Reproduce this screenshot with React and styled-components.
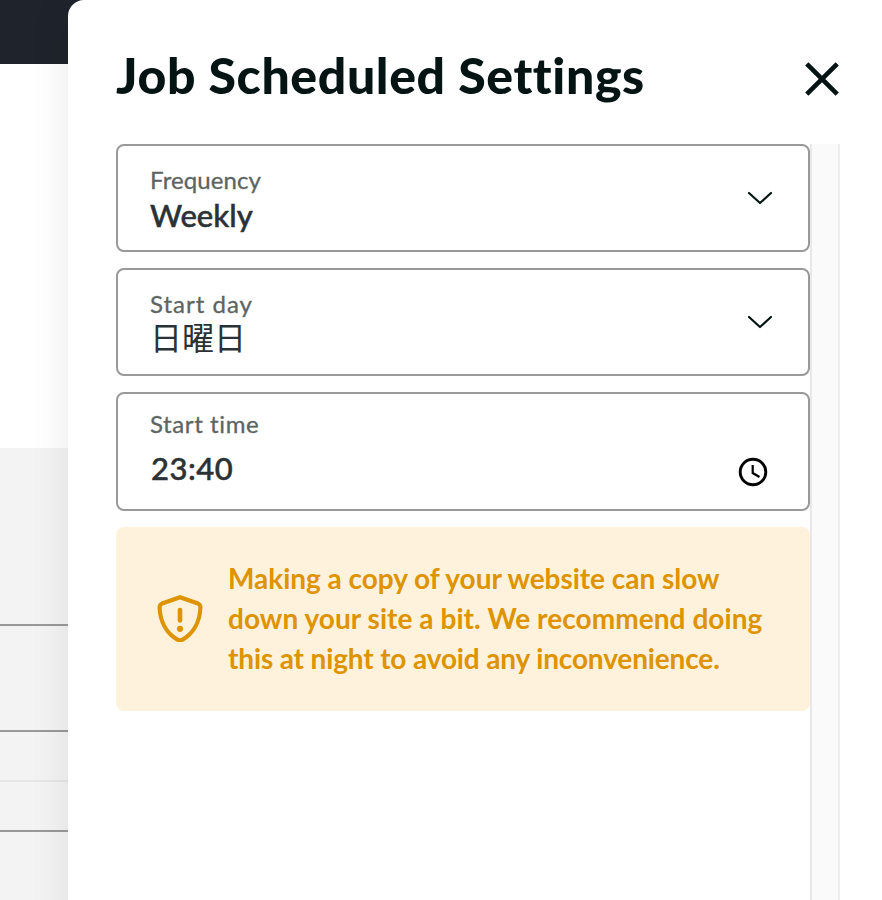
import React from 'react';
import styled, { createGlobalStyle } from 'styled-components';

const colors = {
  ink: '#041413',
  text: '#2b3235',
  label: '#5d6462',
  border: '#999999',
  topbar: '#1f232b',
  warning: '#de9300',
  warningBg: '#fff2dc',
};

const GlobalStyle = createGlobalStyle`
  * {
    box-sizing: border-box;
  }

  body {
    margin: 0;
    background: #fff;
    font-family: 'Lato', 'Noto Sans CJK JP', sans-serif;
  }
`;

const Page = styled.div`
  display: grid;
  height: 900px;
  overflow: hidden;
`;

const Backdrop = styled.div`
  grid-area: 1 / 1;
  display: flex;
  flex-direction: column;
`;

const TopBar = styled.div`
  height: 64px;
  background: ${colors.topbar};
`;

const Blank = styled.div`
  height: 384px;
`;

const BackdropRow = styled.div`
  height: ${({ $height }) => $height}px;
  background: #f3f3f3;
  border-bottom: 2px solid ${({ $line }) => $line || 'transparent'};
`;

const Drawer = styled.section`
  grid-area: 1 / 1;
  display: flex;
  flex-direction: column;
  height: 1000px;
  margin-left: 68px;
  padding-left: 48px;
  background: #fff;
  border-top-left-radius: 16px;
  box-shadow: 0 8px 42px rgba(0, 20, 18, 0.09);
  z-index: 1;
`;

const Header = styled.header`
  display: flex;
  justify-content: space-between;
  align-items: flex-start;
  height: 144px;
  padding: 43px 42px 0 0;
`;

const Title = styled.h1`
  margin: 0;
  color: ${colors.ink};
  font-size: 50px;
  font-weight: 900;
  line-height: 64px;
  letter-spacing: 0.6px;
  white-space: nowrap;
`;

const CloseButton = styled.button`
  display: flex;
  margin-top: 18px;
  padding: 0;
  border: 0;
  background: none;
`;

const Scroller = styled.div`
  display: flex;
  flex: 1;
  width: 724px;
`;

const Form = styled.div`
  display: flex;
  flex-direction: column;
  gap: 16px;
  width: 694px;
`;

const Scrollbar = styled.div`
  width: 30px;
  background: #fafafa;
  border-left: 2px solid #e8e8e8;
  border-right: 2px solid #ededed;
`;

const Field = styled.div`
  display: flex;
  justify-content: space-between;
  align-items: flex-start;
  height: ${({ $tall }) => ($tall ? 119 : 108)}px;
  padding: ${({ $tall }) => ($tall ? '14px 40px 0 32px' : '18px 36px 0 32px')};
  border: 2px solid ${colors.border};
  border-radius: 8px;
`;

const FieldText = styled.div`
  display: flex;
  flex-direction: column;
  gap: ${({ $gap }) => $gap || 0}px;
  white-space: nowrap;
`;

const Label = styled.span`
  color: ${colors.label};
  font-size: 24px;
  line-height: 32px;
  letter-spacing: ${({ $spacing }) => $spacing || 0}px;
  -webkit-text-stroke: 0.3px currentColor;
`;

const Value = styled.span`
  color: ${colors.text};
  font-size: 31px;
  font-weight: 500;
  line-height: 38px;
  letter-spacing: ${({ $spacing }) => $spacing || 0}px;
  -webkit-text-stroke: 0.5px currentColor;

  &:lang(ja) {
    font-size: 32px;
    font-weight: 400;
    line-height: 35px;
    -webkit-text-stroke: 0;
  }
`;

const TimeValue = styled(Value)`
  padding-left: 1px;
`;

const FieldIcon = styled.span`
  display: flex;
  margin-top: ${({ $top }) => $top}px;
`;

const Alert = styled.div`
  display: flex;
  align-items: center;
  gap: 24px;
  height: 184px;
  padding: 0 40px 2px;
  color: ${colors.warning};
  background: ${colors.warningBg};
  border-radius: 8px;
`;

const AlertText = styled.p`
  display: flex;
  flex-direction: column;
  margin: 0;
  font-size: 28px;
  font-weight: 700;
  line-height: 40px;
  white-space: nowrap;
`;

const AlertLine = styled.span`
  letter-spacing: ${({ $spacing }) => $spacing}px;
`;

const CloseIcon = () => (
  <svg width="36" height="36" viewBox="0 0 36 36" fill="none">
    <path d="M2.8 2.8L33.2 33.2M33.2 2.8L2.8 33.2" stroke={colors.ink} strokeWidth="4.6" />
  </svg>
);

const ChevronIcon = () => (
  <svg width="24" height="14" viewBox="0 0 24 14" fill="none">
    <path
      d="M1 2L12 12L23 2"
      stroke={colors.ink}
      strokeWidth="2.2"
      strokeLinecap="round"
      strokeLinejoin="round"
    />
  </svg>
);

const ClockIcon = () => (
  <svg width="30" height="30" viewBox="0 0 30 30" fill="none" stroke="#000">
    <circle cx="15" cy="15" r="12.8" strokeWidth="2.9" />
    <path d="M14.7 8V16L21.5 20" strokeWidth="2.2" />
  </svg>
);

const ShieldIcon = () => (
  <svg width="48" height="48" viewBox="0 0 48 48" fill="none" stroke="currentColor">
    <path
      d="M24 3.2L42 9.6Q44.4 10.6 44.4 13.2C44 28 37 39.5 26.6 45.6Q24 47 21.4 45.6C11 39.5 4 28 3.6 13.2Q3.6 10.6 6 9.6Z"
      strokeWidth="4.2"
      strokeLinejoin="round"
    />
    <path d="M24 16V26.5" strokeWidth="4.6" strokeLinecap="round" />
    <circle cx="24" cy="34.8" r="3.1" fill="currentColor" stroke="none" />
  </svg>
);

const SelectField = ({ label, value, lang, labelSpacing, valueSpacing }) => (
  <Field>
    <FieldText>
      <Label $spacing={labelSpacing}>{label}</Label>
      <Value lang={lang} $spacing={valueSpacing}>
        {value}
      </Value>
    </FieldText>
    <FieldIcon $top={27}>
      <ChevronIcon />
    </FieldIcon>
  </Field>
);

const App = () => {
  return (
    <>
      <GlobalStyle />
      <Page>
        <Backdrop>
          <TopBar />
          <Blank />
          <BackdropRow $height={178} $line={colors.border} />
          <BackdropRow $height={106} $line={colors.border} />
          <BackdropRow $height={50} $line="#e6e6e6" />
          <BackdropRow $height={50} $line={colors.border} />
          <BackdropRow $height={168} $line="#f3f3f3" />
        </Backdrop>
        <Drawer>
          <Header>
            <Title>Job Scheduled Settings</Title>
            <CloseButton aria-label="Close">
              <CloseIcon />
            </CloseButton>
          </Header>
          <Scroller>
            <Form>
              <SelectField label="Frequency" value="Weekly" labelSpacing={0.1} />
              <SelectField label="Start day" value="日曜日" lang="ja" labelSpacing={1} />
              <Field $tall>
                <FieldText $gap={9}>
                  <Label $spacing={0.6}>Start time</Label>
                  <TimeValue $spacing={0.5}>23:40</TimeValue>
                </FieldText>
                <FieldIcon $top={49}>
                  <ClockIcon />
                </FieldIcon>
              </Field>
              <Alert>
                <ShieldIcon />
                <AlertText>
                  <AlertLine $spacing={-0.03}>Making a copy of your website can slow</AlertLine>
                  <AlertLine $spacing={0.06}>down your site a bit. We recommend doing</AlertLine>
                  <AlertLine $spacing={-0.14}>this at night to avoid any inconvenience.</AlertLine>
                </AlertText>
              </Alert>
            </Form>
            <Scrollbar />
          </Scroller>
        </Drawer>
      </Page>
    </>
  );
};

export default App;
